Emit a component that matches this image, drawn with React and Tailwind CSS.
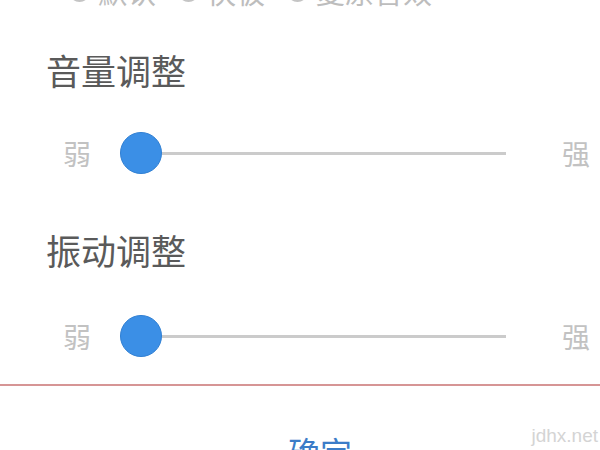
const CJK = "font-['Noto_Sans_CJK_SC','Noto_Sans',sans-serif]";

function Radio({ label }) {
  return (
    <div className="flex items-center">
      <span className="h-[21px] w-[21px] rounded-full border-[3px] border-[#c4c4c4]" />
      <span className="ml-[8px]">{label}</span>
    </div>
  );
}

function Slider() {
  return (
    <div className="flex h-[42px] items-center pl-[63px]">
      <span className="w-[30px] text-[28px] leading-none text-[#c2c2c2]">弱</span>
      <div className="ml-[27px] flex items-center">
        <span className="h-[42px] w-[42px] rounded-full border border-[#2f7fd3] bg-[#3b8fe6]" />
        <span className="h-[3px] w-[344px] bg-[#cbcbcb]" />
      </div>
      <span className="ml-[56px] text-[28px] leading-none text-[#c2c2c2]">强</span>
    </div>
  );
}

export default function App() {
  return (
    <div className={`relative h-[450px] w-[600px] overflow-hidden bg-white ${CJK}`}>
      {/* options row, mostly scrolled off the top */}
      <div className="-mt-[23px] flex h-[29px] items-center gap-[22px] pl-[69px] text-[29px] leading-none text-[#bdbdbd]">
        <Radio label="默认" />
        <Radio label="快板" />
        <Radio label="复原音效" />
      </div>

      <h2 className="mt-[46px] pl-[46px] text-[35px] leading-none font-normal text-[#5a5a5a]">音量调整</h2>
      <div className="mt-[45px]">
        <Slider />
      </div>

      <h2 className="mt-[58px] pl-[46px] text-[35px] leading-none font-normal text-[#5a5a5a]">振动调整</h2>
      <div className="mt-[48px]">
        <Slider />
      </div>

      <div className="mt-[27px] h-[2px] bg-[#d69595]" />

      <div className="mt-[49px] pl-[288px] text-[32px] leading-none text-[#3b7cc8]">确定</div>

      <span className="absolute right-[2px] bottom-[5px] font-['Liberation_Sans',sans-serif] text-[19px] leading-none text-[#d4d4d4]">
        jdhx.net
      </span>
    </div>
  );
}
